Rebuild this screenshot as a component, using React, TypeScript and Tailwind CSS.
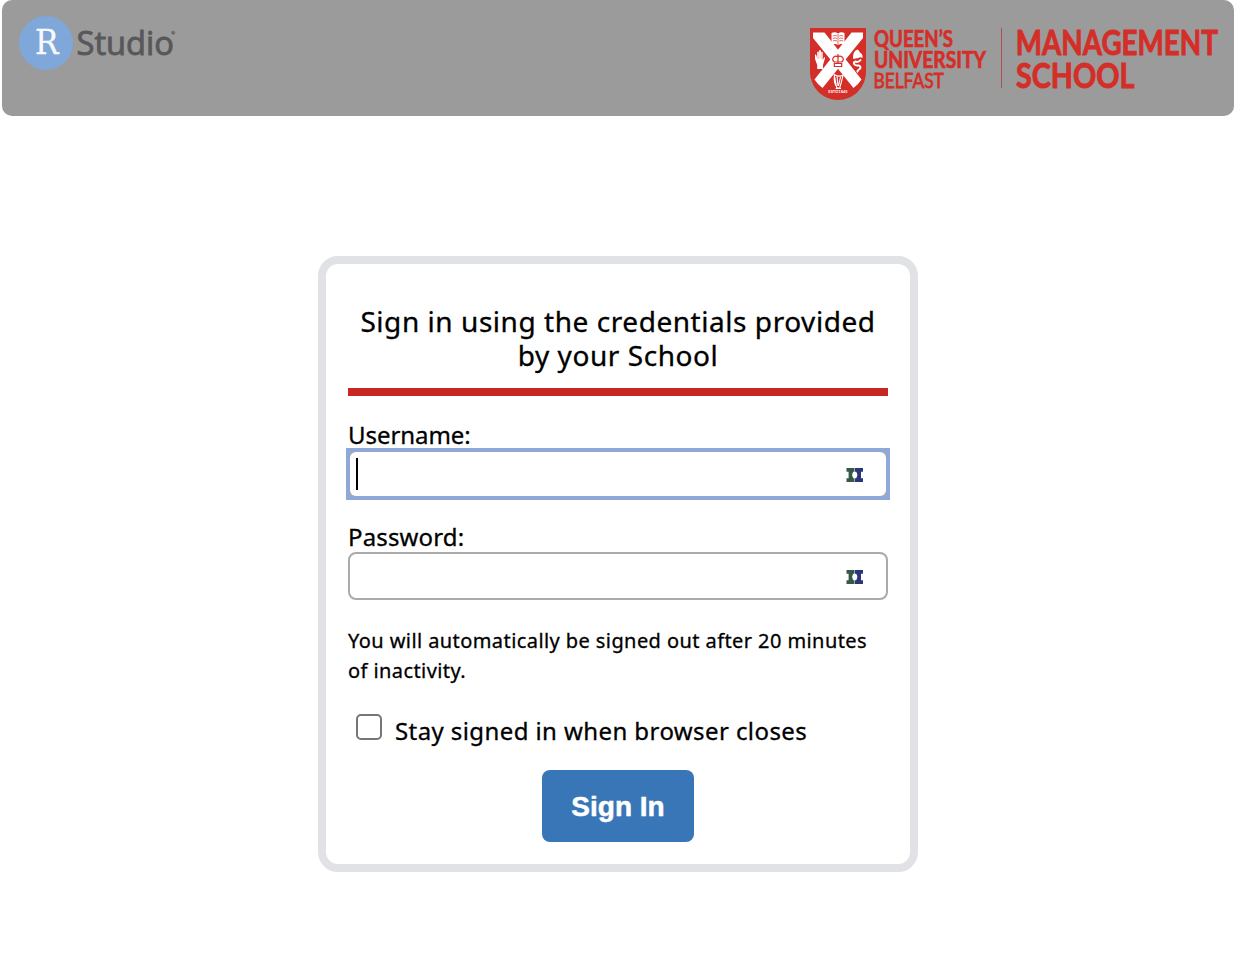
import React from "react";

function StudioLogo() {
  return (
    <svg width="162" height="60" viewBox="0 0 162 60" className="block overflow-visible" aria-label="R Studio">
      <circle cx="30" cy="29" r="27" fill="#7fa7d9" />
      <text x="19" y="39.7" textLength="23.5" lengthAdjust="spacingAndGlyphs" fontFamily="DejaVu Serif, serif" fontSize="33" fill="#f7f9fc" stroke="#f7f9fc" strokeWidth="0.3">R</text>
      <text x="60.5" y="41" textLength="97.5" lengthAdjust="spacingAndGlyphs" fontFamily="Open Sans, sans-serif" fontSize="33.5" fill="#58585a" stroke="#58585a" strokeWidth="0.9">Studio</text>
      <circle cx="157.2" cy="18.8" r="2" fill="#6d6d6e" />
    </svg>
  );
}

function Crest() {
  return (
    <svg width="56" height="72" viewBox="0 0 56 72" className="block shrink-0">
      <defs>
        <clipPath id="shield">
          <path d="M0 0H56V43C56 60 43 72 28 72S0 60 0 43Z" />
        </clipPath>
      </defs>
      <g clipPath="url(#shield)">
        <rect width="56" height="72" fill="#d42e28" />
        <path d="M3 4.5H14.5L51.5 51.5Q48 57 43.5 60L3 10Z" fill="#fff" />
        <path d="M53 4.5H41.5L4.5 51.5Q8 57 12.5 60L53 10Z" fill="#fff" />
      </g>
      <path d="M21.5 5Q25 3.5 28 5.5Q31 3.5 34.5 5V16.8Q31 15 28 17Q25 15 21.5 16.8Z" fill="#fff" />
      <path d="M28 6V16.5M22.9 8Q25 7 27 8M22.9 10.5Q25 9.5 27 10.5M22.9 13Q25 12 27 13M29.2 8Q31 7 33.2 8M29.2 10.5Q31 9.5 33.2 10.5M29.2 13Q31 12 33.2 13" fill="none" stroke="#d42e28" strokeWidth="0.7" />
      <path d="M7.2 41V37L5 31V26.5Q6.2 26 6.6 28L7.2 31V24Q8.2 23 8.8 24V31H9.1V22.4Q10.1 21.6 10.9 22.5V31H11.2V24Q12.1 23.4 12.7 24.3V32L14 29.5Q15.3 28.8 15 30.3L13 37V41Z" fill="#fff" />
      <path d="M43 29Q43 23 47.5 21.5Q49 22.5 50 24.5Q53 26 52.5 30Q50 28.5 48.5 30L43 31Z" fill="#fff" />
      <path d="M44.5 33Q48 35.5 51 31.5M44 33.5Q43.5 37.5 47 37.5H49Q52 39.5 49 41.5Q46.5 43 48 44.3" fill="none" stroke="#fff" strokeWidth="2" />
      <path d="M24.3 35.5H31.7V38.5H24.3ZM24.3 34Q21.5 31.5 23.6 29.2Q26 27 28 29Q30 27 32.4 29.2Q34.5 31.5 31.7 34ZM28 26V35" fill="none" stroke="#d42e28" strokeWidth="1.2" />
      <path d="M24.2 46.5Q29 49.5 33.2 47L29.8 60H26.7ZM24.5 47.5Q23.3 54 27 59.5M27 48L28 58M30.5 49L28.5 58M25.7 60.5H31" fill="none" stroke="#fff" strokeWidth="1.1" />
      <text x="18.3" y="65" textLength="19.4" lengthAdjust="spacing" fontFamily="Lato, sans-serif" fontSize="4" fontWeight="700" fill="#fff">ESTD1845</text>
    </svg>
  );
}

function SchoolLogo() {
  return (
    <div className="flex items-start" aria-label="Queen's University Belfast Management School">
      <Crest />
      <svg width="352" height="72" viewBox="0 0 352 72" className="block overflow-visible" fontFamily="Lato, sans-serif" fill="#d42e28">
        <g fontWeight="700" fontSize="23" stroke="#d42e28" strokeWidth="0.7">
          <text x="8" y="18.5" textLength="79" lengthAdjust="spacingAndGlyphs">QUEEN’S</text>
          <text x="8" y="40.2" textLength="112" lengthAdjust="spacingAndGlyphs">UNIVERSITY</text>
        </g>
        <text x="7.4" y="59.6" textLength="70.5" lengthAdjust="spacingAndGlyphs" fontSize="20.8" stroke="#d42e28" strokeWidth="0.8">BELFAST</text>
        <path d="M135.5 0V60" stroke="#a8524f" strokeWidth="1" />
        <g fontWeight="700" fontSize="33.5" stroke="#d42e28" strokeWidth="0.9">
          <text x="149.8" y="26.7" textLength="202" lengthAdjust="spacingAndGlyphs">MANAGEMENT</text>
          <text x="150" y="59.5" textLength="118.5" lengthAdjust="spacingAndGlyphs">SCHOOL</text>
        </g>
      </svg>
    </div>
  );
}

function ManagerIcon() {
  return (
    <svg width="18" height="16" viewBox="0 0 18 16" className="block">
      <path d="M0.5 1H8.5V4.8H7.4Q4.9 8 7.4 11.2H8.5V15H0.5V11.2H2.6V4.8H0.5Z" fill="#355849" />
      <path d="M9 1H17V4.8H15V11.2H17V15H9V11.2H10.1Q12.6 8 10.1 4.8H9Z" fill="#2c347a" />
    </svg>
  );
}

export default function App() {
  return (
    <div className="h-[974px] w-[1236px] bg-white font-['Noto_Sans',sans-serif] text-black">
      <header className="mx-[2px] flex h-[116px] items-start justify-between rounded-[10px] bg-[#9b9b9b] pt-[14px] pr-[16px] pl-[14px]">
        <StudioLogo />
        <div className="pt-[14px]">
          <SchoolLogo />
        </div>
      </header>

      <main className="mx-auto mt-[140px] h-[616px] w-[600px] rounded-[20px] border-8 border-[#e1e2e6] px-[22px] pt-[40px] [-webkit-text-stroke:0.3px_black]">
        <h1 className="h-[84px] text-center text-[28px] leading-[34px] tracking-[0.55px] whitespace-nowrap">
          Sign in using the credentials provided
          <br />
          by your School
        </h1>
        <div className="h-2 bg-[#c62823]" />

        <label className="mt-[23px] block h-[29px] text-[24px] leading-[32px] tracking-[-0.05px]">Username:</label>
        <div className="-mx-[2px] h-[52px] border-4 border-[#8fa8d7] bg-[#aaaaaa]">
          <div className="flex h-[44px] items-center justify-between rounded-[6px] bg-white pr-[22px] pl-[6px]">
            <div className="h-8 w-[2px] bg-black" />
            <div className="pt-[2px]">
              <ManagerIcon />
            </div>
          </div>
        </div>

        <label className="mt-[21px] block h-[31px] text-[24px] leading-[32px] tracking-[0.15px]">Password:</label>
        <div className="flex h-12 items-center justify-end rounded-[8px] border-2 border-[#aaaaaa] pt-[2px] pr-[22px]">
          <ManagerIcon />
        </div>

        <p className="mt-[26px] text-[20px] leading-[30px] tracking-[0.42px] whitespace-nowrap">
          You will automatically be signed out after 20 minutes
          <br />
          of inactivity.
        </p>

        <div className="mt-[28px] flex h-[56px] items-start pl-2">
          <div className="h-[26px] w-[26px] rounded-[5px] border-2 border-[#767676]" />
          <span className="mt-[1px] ml-[13px] text-[24px] leading-[32px] tracking-[0.41px] whitespace-nowrap">Stay signed in when browser closes</span>
        </div>

        <button className="mx-auto flex h-[72px] w-[152px] items-center justify-center rounded-[8px] bg-[#3976b7] pt-[2px] font-['Liberation_Sans',sans-serif] text-[28px] font-bold text-white [-webkit-text-stroke:0.5px_white]">
          Sign In
        </button>
      </main>
    </div>
  );
}
